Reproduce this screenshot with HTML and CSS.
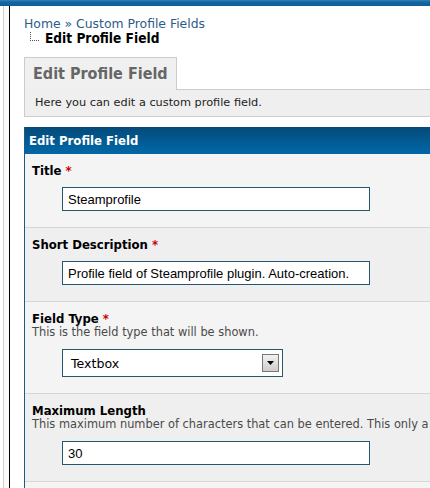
FILE: index.html
```html
<!DOCTYPE html>
<html>
<head>
<meta charset="utf-8">
<title>Edit Profile Field</title>
<link rel="stylesheet" href="styles.css">
</head>
<body>
<div class="topbar"></div>
<div class="layout">
  <div class="sidebar"></div>
  <div class="main">
    <div class="breadcrumb">
      <div class="crumbs"><a href="#">Home</a> » <a href="#">Custom Profile Fields</a></div>
      <div class="current"><span class="tree"></span>Edit Profile Field</div>
    </div>
    <div class="tabs"><div class="tab">Edit Profile Field</div></div>
    <div class="tabdesc">Here you can edit a custom profile field.</div>
    <div class="form">
      <div class="form-head">Edit Profile Field</div>
      <div class="row">
        <div class="label">Title <span class="req">*</span></div>
        <div class="field"><input class="text" type="text" value="Steamprofile"></div>
      </div>
      <div class="row">
        <div class="label">Short Description <span class="req">*</span></div>
        <div class="field"><input class="text" type="text" value="Profile field of Steamprofile plugin. Auto-creation."></div>
      </div>
      <div class="row">
        <div class="label">Field Type <span class="req">*</span></div>
        <div class="desc">This is the field type that will be shown.</div>
        <div class="field">
          <div class="select"><span>Textbox</span><span class="btn"><svg width="7" height="4" viewBox="0 0 7 4"><path d="M0 0H7L3.5 4Z" fill="#000"/></svg></span></div>
        </div>
      </div>
      <div class="row">
        <div class="label">Maximum Length</div>
        <div class="desc">This maximum number of characters that can be entered. This only a</div>
        <div class="field"><input class="text" type="text" value="30"></div>
      </div>
      <div class="row empty"></div>
    </div>
  </div>
</div>
</body>
</html>
```

FILE: styles.css
```css
html, body {
  margin: 0;
  padding: 0;
  background: #fff;
  overflow: hidden;
}
body {
  width: 430px;
  height: 488px;
  font-family: "DejaVu Sans", Verdana, sans-serif;
}
.topbar {
  height: 6px;
  background: linear-gradient(#3a80b4 0, #1268a3 2px, #0b5f9b 100%);
}
.layout {
  display: flex;
  height: 482px;
}
.sidebar {
  flex: 0 0 9px;
  border-right: 1px solid #000;
  background: linear-gradient(to right, #fff 3px, #cfcfcf 3px, #cfcfcf 4px, #fafafa 4px);
}
.main {
  flex: 0 0 406px;
  padding-left: 14px;
}
.breadcrumb {
  margin-top: 10px;
}
.crumbs {
  font-size: 12.4px;
  line-height: 15px;
  color: #2d5b89;
}
.crumbs a {
  color: #2d5b89;
  text-decoration: none;
}
.current {
  display: flex;
  align-items: flex-start;
  font-family: "DejaVu Sans Condensed", "DejaVu Sans", sans-serif;
  font-weight: bold;
  font-size: 13.6px;
  line-height: 15px;
  color: #000;
}
.tree {
  width: 8px;
  height: 8px;
  margin: 1px 6px 0 6px;
  border-left: 1px dotted #555;
  border-bottom: 1px dotted #555;
}
.tabs {
  display: flex;
  margin-top: 11px;
}
.tabs::after {
  content: "";
  flex: 1;
  border-bottom: 1px solid #ccc;
}
.tab {
  height: 32px;
  line-height: 32px;
  padding: 0 8px;
  border: 1px solid #ccc;
  border-bottom: none;
  background: #f0f0f0;
  color: #666;
  font-family: "DejaVu Sans Condensed", "DejaVu Sans", sans-serif;
  font-weight: bold;
  font-size: 16px;
}
.tabdesc {
  height: 26px;
  line-height: 26px;
  padding-left: 10px;
  border: 1px solid #ccc;
  border-top: none;
  border-right: none;
  background: #efefef;
  font-size: 11.3px;
  color: #222;
}
.form {
  margin-top: 10px;
  border-left: 1px solid #1d5a85;
}
.form-head {
  height: 27px;
  line-height: 27px;
  padding-left: 4px;
  background: linear-gradient(#044a78, #0268a9);
  color: #fff;
  font-family: "DejaVu Sans Condensed", "DejaVu Sans", sans-serif;
  font-weight: bold;
  font-size: 13px;
}
.row {
  padding: 9px 8px 16px 7px;
  border-bottom: 1px solid #d6d6d6;
  background: #f4f4f4;
}
.row:nth-child(odd) {
  background: #efefef;
}
.row.empty {
  height: 20px;
  padding: 0;
  border-bottom: none;
}
.label {
  font-family: "DejaVu Sans Condensed", "DejaVu Sans", sans-serif;
  font-weight: bold;
  font-size: 13px;
  line-height: 15px;
  color: #000;
}
.req {
  color: #c00;
}
.desc {
  margin-top: -1px;
  font-size: 11.4px;
  line-height: 14px;
  color: #4a4a4a;
  white-space: nowrap;
}
.field {
  margin-top: 9px;
  padding-left: 30px;
}
.desc + .field {
  margin-top: 10px;
}
.text {
  display: block;
  box-sizing: border-box;
  width: 308px;
  height: 24px;
  margin: 0;
  padding: 0 5px;
  border: 1px solid #27566f;
  background: #fff;
  font-family: "Liberation Sans", Arial, sans-serif;
  font-size: 13px;
  color: #000;
  outline: none;
}
.select {
  box-sizing: border-box;
  width: 221px;
  height: 28px;
  display: flex;
  align-items: center;
  justify-content: space-between;
  padding: 0 3px 0 8px;
  border: 1px solid #27566f;
  background: #fff;
  font-size: 12.6px;
  color: #000;
}
.btn {
  box-sizing: border-box;
  width: 17px;
  height: 18px;
  display: flex;
  align-items: center;
  justify-content: center;
  border: 1px solid #777;
  background: linear-gradient(#f2f2f2, #cdcdcd);
}
```
